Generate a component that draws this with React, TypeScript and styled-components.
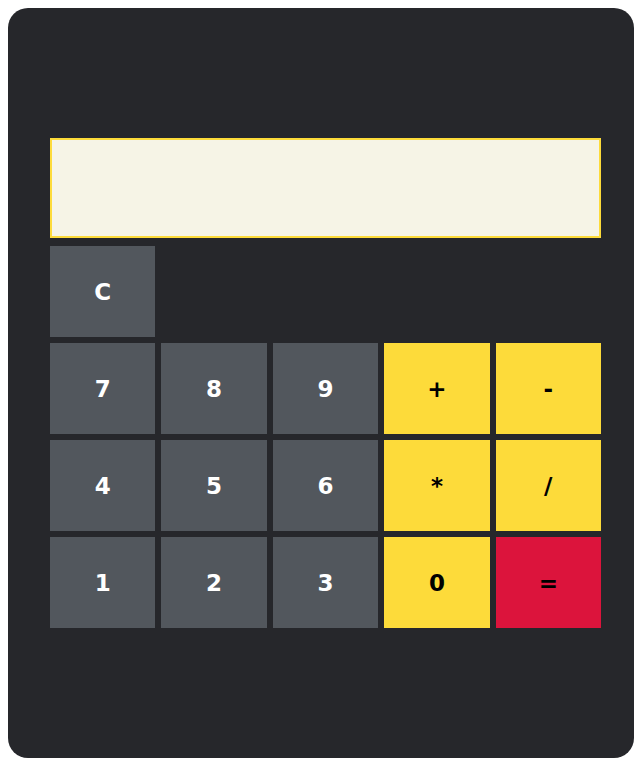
import React, { useState } from 'react';
import styled, { createGlobalStyle, css } from 'styled-components';

const GlobalStyle = createGlobalStyle`
  body {
    margin: 8px;
    background: #ffffff;
    font-family: 'DejaVu Sans', 'Liberation Sans', sans-serif;
  }
`;

const StyledCalculator = styled.div`
  box-sizing: border-box;
  width: 626px;
  height: 750px;
  padding: 130px 33px 130px 42px;
  background-color: #26272b;
  border-radius: 20px;
  display: flex;
  flex-direction: column;
  gap: 8px;
`;

const StyledDisplay = styled.div`
  box-sizing: border-box;
  height: 100px;
  background-color: #f6f4e6;
  border: 2px solid #fddb3a;
  display: flex;
  align-items: center;
  justify-content: flex-end;
  padding: 0 16px;
  font-size: 32px;
  color: #26272b;
`;

const StyledKeypad = styled.div`
  display: grid;
  grid-template-columns: repeat(5, 1fr);
  grid-auto-rows: 91px;
  gap: 6px;
`;

type Variant = 'number' | 'operator' | 'equals';

const variants = {
  number: css`
    background-color: #52575d;
    color: #ffffff;
  `,
  operator: css`
    background-color: #fddb3a;
    color: #000000;
  `,
  equals: css`
    background-color: #dc143c;
    color: #000000;
  `,
};

const StyledKey = styled.button<{ $variant: Variant }>`
  border: none;
  margin: 0;
  padding: 0;
  font-family: 'DejaVu Sans', 'Liberation Sans', sans-serif;
  font-weight: 700;
  font-size: 23px;
  cursor: pointer;
  ${({ $variant }) => variants[$variant]};
`;

const StyledSpacer = styled.div`
  grid-column: span 4;
`;

const rows: [string, Variant][][] = [
  [['7', 'number'], ['8', 'number'], ['9', 'number'], ['+', 'operator'], ['-', 'operator']],
  [['4', 'number'], ['5', 'number'], ['6', 'number'], ['*', 'operator'], ['/', 'operator']],
  [['1', 'number'], ['2', 'number'], ['3', 'number'], ['0', 'operator'], ['=', 'equals']],
];

const App = () => {
  const [value, setValue] = useState('');

  const press = (key: string) => {
    if (key === '=') {
      try {
        // eslint-disable-next-line no-new-func
        setValue(String(Function(`return (${value})`)()));
      } catch {
        setValue('');
      }
      return;
    }
    setValue((prev) => prev + key);
  };

  return (
    <>
      <GlobalStyle />
      <StyledCalculator>
        <StyledDisplay>{value}</StyledDisplay>
        <StyledKeypad>
          <StyledKey $variant="number" onClick={() => setValue('')}>
            C
          </StyledKey>
          <StyledSpacer />
          {rows.flat().map(([label, variant]) => (
            <StyledKey key={label} $variant={variant} onClick={() => press(label)}>
              {label}
            </StyledKey>
          ))}
        </StyledKeypad>
      </StyledCalculator>
    </>
  );
};

export default App;
